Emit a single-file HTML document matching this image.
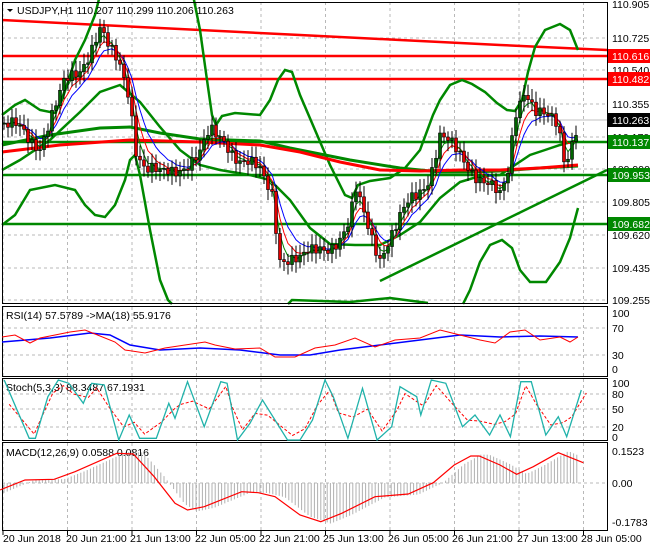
<!DOCTYPE html>
<html><head><meta charset="utf-8"><style>
html,body{margin:0;padding:0;background:#fff;width:650px;height:550px;overflow:hidden}
svg{display:block}
text{font-family:"Liberation Sans",sans-serif;font-size:10.5px;fill:#000}
</style></head><body>
<svg id="s" width="650" height="550" xmlns="http://www.w3.org/2000/svg">
<rect width="650" height="550" fill="#fff"/>
<g id="grid" stroke="#b8b8b8" stroke-dasharray="3,3" stroke-width="1"></g>
<g id="main"></g>
<!-- horizontal levels -->
<line x1="2" y1="120" x2="607" y2="120" stroke="#c0c0c0" stroke-width="1"/>
<polyline points="2,20 100,25 200,30 300,35 400,40 500,45 607,50" fill="none" stroke="#f00" stroke-width="2.5"/>
<line x1="2" y1="56" x2="607" y2="56" stroke="#f00" stroke-width="2.5"/>
<line x1="2" y1="79" x2="607" y2="79" stroke="#f00" stroke-width="2.5"/>
<line x1="2" y1="142" x2="607" y2="142" stroke="#080" stroke-width="2.5"/>
<line x1="2" y1="175" x2="607" y2="175" stroke="#080" stroke-width="2.5"/>
<line x1="2" y1="224" x2="607" y2="224" stroke="#080" stroke-width="2.5"/>
<line x1="380" y1="281" x2="607" y2="170" stroke="#080" stroke-width="2.5"/>
<!-- bands -->
<g fill="none" stroke="#080" stroke-width="2.5">
<polyline points="2,115 15,105 25,100 40,110 55,113 62,100 67,85 75,60 85,40 95,15 100,-5"/>
<polyline points="193,-5 200,30 207,80 212,115 216,125 222,116 235,113 260,115 270,100 278,80 285,70 292,72 300,95 315,130 330,165 345,195 352,198 358,185 370,181 390,178 405,168 420,150 433,115 440,100 450,85 462,80 472,84 485,92 497,103 507,110 515,111 522,100 528,72 535,47 545,30 560,24 570,30 578,50"/>
<polyline points="2,225 15,215 30,190 55,185 75,190 85,205 95,215 105,217 115,205 125,180 130,160 135,155 140,175 150,230 160,280 168,300 172,304"/>
<polyline points="288,304 292,300 350,302 390,298 428,303"/>
<polyline points="463,304 470,290 480,262 490,245 502,240 512,248 520,270 530,282 546,282 560,262 570,238 578,208"/>
<polyline points="2,170 20,160 50,140 80,112 100,92 120,85 140,102 160,127 180,150 200,165 220,170 250,175 270,180 290,200 310,228 330,244 355,245 380,245 400,235 420,222 440,198 460,182 480,176 500,175 515,165 530,155 545,150 560,145 578,140"/>
</g>
<polyline points="2,145 50,135 100,128 130,127 160,133 200,139 260,141 290,148 350,160 400,168 440,172 470,172 500,171 540,168 578,166" fill="none" stroke="#080" stroke-width="3"/>
<polyline points="2,152 60,145 130,140 200,142 260,145 300,152 340,162 380,170 420,171 460,170 500,170 540,168 578,165" fill="none" stroke="#f00" stroke-width="3"/>
<g id="candles"></g>
<!-- panel borders -->
<g fill="none" stroke="#000" stroke-width="1">
<rect x="2.5" y="2.5" width="605" height="301"/>
<rect x="2.5" y="306.5" width="605" height="70"/>
<rect x="2.5" y="378.5" width="605" height="62"/>
<rect x="2.5" y="442.5" width="605" height="88"/>
</g>
<g id="ticks" stroke="#000"></g>
<!-- labels right -->
<g>
<text x="612" y="8">110.905</text><text x="612" y="42">110.725</text><text x="612" y="74">110.540</text>
<text x="612" y="108">110.355</text><text x="612" y="141">110.170</text><text x="612" y="173">109.990</text>
<text x="612" y="206">109.805</text><text x="612" y="239">109.620</text><text x="612" y="272">109.435</text><text x="612" y="304">109.255</text>
<rect x="608" y="49" width="42" height="14" fill="#f00"/><text x="612" y="60" style="fill:#fff">110.616</text>
<rect x="608" y="72" width="42" height="14" fill="#f00"/><text x="612" y="83" style="fill:#fff">110.482</text>
<rect x="608" y="113" width="42" height="14" fill="#000"/><text x="612" y="124" style="fill:#fff">110.263</text>
<rect x="608" y="135" width="42" height="14" fill="#080"/><text x="612" y="146" style="fill:#fff">110.137</text>
<rect x="608" y="168" width="42" height="14" fill="#080"/><text x="612" y="179" style="fill:#fff">109.953</text>
<rect x="608" y="217" width="42" height="14" fill="#080"/><text x="612" y="228" style="fill:#fff">109.682</text>
<text x="612" y="317">100</text><text x="612" y="332">70</text><text x="612" y="359">30</text><text x="612" y="373">0</text>
<text x="612" y="387">100</text><text x="612" y="398">80</text><text x="612" y="413">50</text><text x="612" y="431">20</text><text x="612" y="441">0</text>
<text x="612" y="455">0.1523</text><text x="612" y="487">0.00</text><text x="612" y="526">-0.1783</text>
</g>
<path d="M7,9 L13,9 L10,12 Z" fill="#000"/>
<text x="17" y="14">USDJPY,H1  110.207 110.299 110.206 110.263</text>
<text x="6" y="319">RSI(14) 57.5789  -&gt;MA(18) 55.9176</text>
<text x="6" y="391">Stoch(5,3,3) 88.3487 67.1931</text>
<text x="6" y="456">MACD(12,26,9) 0.0588 0.0816</text>
<g>
<text x="3" y="542">20 Jun 2018</text><text x="66" y="542">20 Jun 21:00</text><text x="130" y="542">21 Jun 13:00</text>
<text x="195" y="542">22 Jun 05:00</text><text x="259" y="542">22 Jun 21:00</text><text x="323" y="542">25 Jun 13:00</text>
<text x="388" y="542">26 Jun 05:00</text><text x="452" y="542">26 Jun 21:00</text><text x="517" y="542">27 Jun 13:00</text><text x="581" y="542">28 Jun 05:00</text>
</g>
</svg>
<script>
var NS="http://www.w3.org/2000/svg",s=document.getElementById('s');
function el(p,t,a){var e=document.createElementNS(NS,t);for(var k in a)e.setAttribute(k,a[k]);p.appendChild(e);return e;}
var g=document.getElementById('grid');
for(var k=0;k<10;k++){var x=3+k*64.5;[[2,303],[307,376],[379,440],[443,530]].forEach(function(r){el(g,'line',{x1:x,y1:r[0],x2:x,y2:r[1]});});
 el(document.getElementById('ticks'),'line',{x1:x,y1:531,x2:x,y2:535});}
[38,70,104,137,169,202,235,268,300].forEach(function(y){el(g,'line',{x1:2,y1:y,x2:607,y2:y});});
[328,355,394,409,427,483].forEach(function(y){el(g,'line',{x1:2,y1:y,x2:607,y2:y});});
function interp(pts,x){for(var i=1;i<pts.length;i++){if(x<=pts[i][0]){var a=pts[i-1],b=pts[i];return a[1]+(b[1]-a[1])*(x-a[0])/(b[0]-a[0]);}}return pts[pts.length-1][1];}
var P=[[4,110.2],[20,110.2],[40,110.12],[55,110.3],[65,110.45],[80,110.55],[90,110.65],[100,110.75],[110,110.62],[120,110.55],[130,110.4],[135,110.12],[145,109.98],[160,109.93],[180,110.0],[200,110.05],[210,110.17],[225,110.15],[240,110.03],[260,109.95],[272,109.85],[280,109.5],[300,109.45],[320,109.55],[340,109.58],[350,109.65],[355,109.85],[365,109.72],[380,109.5],[395,109.62],[410,109.8],[430,109.95],[440,110.15],[450,110.1],[470,110.0],[490,109.88],[500,109.8],[508,109.95],[515,110.3],[525,110.45],[535,110.3],[545,110.25],[558,110.22],[565,110.02],[572,110.15],[578,110.26]];
function Y(p){return 3+(110.905-p)*179;}
var cg=document.getElementById('candles'),closes=[],xs=[];
for(var x=4;x<=578;x+=4){var c=interp(P,x)+0.04*Math.sin(x*1.7)+0.025*Math.sin(x*0.63);closes.push(c);xs.push(x);}
function ema(n){var a=2/(n+1),r=[],v=closes[0];closes.forEach(function(c){v=v+a*(c-v);r.push(v);});return r;}
[[8,'#00f'],[5,'#f00'],[3,'#080']].forEach(function(m){var e=ema(m[0]);el(cg,'polyline',{points:e.map(function(v,i){return xs[i]+','+Y(v).toFixed(1);}).join(' '),fill:'none',stroke:m[1],'stroke-width':1});});
for(var i=0;i<closes.length;i++){var o=i?closes[i-1]:closes[0],c=closes[i],x=xs[i];
 var hi=Math.max(o,c)+0.03+0.03*Math.abs(Math.sin(x*2.3)),lo=Math.min(o,c)-0.03-0.03*Math.abs(Math.cos(x*1.9));
 el(cg,'line',{x1:x,y1:Y(hi),x2:x,y2:Y(lo),stroke:'#000','stroke-width':1});
 var t=Y(Math.max(o,c)),b=Y(Math.min(o,c));if(b-t<1)b=t+1;
 el(cg,'rect',{x:x-1.5,y:t,width:3,height:b-t,fill:c>=o?'#006400':'#e00000',stroke:'#000','stroke-width':0.6});}
function pl(pts,sx,st,w,dash){var a={points:pts.map(function(p){return (p[0]/sx).toFixed(1)+','+(300+p[1]/3).toFixed(1);}).join(' '),fill:'none',stroke:st,'stroke-width':w};if(dash)a['stroke-dasharray']=dash;el(s,'polyline',a);}
function pl2(pts,st,w,dash){var a={points:pts.map(function(p){return p.join(',');}).join(' '),fill:'none',stroke:st,'stroke-width':w};if(dash)a['stroke-dasharray']=dash;el(s,'polyline',a);}
// RSI
pl2([[2,342],[50,338],[90,333],[110,335],[130,345],[160,350],[200,348],[240,350],[280,355],[310,355],[340,350],[380,345],[420,340],[460,335],[500,337],[540,336],[578,337]],'#00f',1.5);
pl2([[2,337],[15,335],[30,343],[40,338],[55,335],[70,332],[85,330],[100,336],[115,342],[125,350],[145,353],[165,348],[185,345],[205,342],[215,345],[235,349],[260,348],[275,357],[295,357],[315,348],[335,345],[355,338],[375,347],[395,340],[420,338],[440,330],[460,335],[480,340],[495,343],[510,332],[525,330],[540,340],[560,337],[570,342],[578,337]],'#f00',1);
// Stoch
var st=[[10,240],[70,415],[85,415],[115,290],[140,240],[165,250],[200,310],[220,250],[250,255],[285,420],[310,345],[335,415],[375,415],[405,310],[420,355],[450,245],[490,380],[530,245],[545,250],[570,420],[600,370],[630,300],[690,420],[720,420],[750,360],[780,240],[800,290],[835,415],[870,265],[905,420],[940,380],[960,260],[1000,290],[1010,345],[1035,240],[1070,250],[1110,380],[1140,345],[1175,405],[1200,345],[1225,410],[1250,245],[1275,245],[1310,405],[1340,350],[1360,410],[1395,270]];
pl(st.map(function(p,i){var n=st[i+1]||p;return [p[0]+12,(p[1]*0.6+n[1]*0.4)*0.85+0.15*330];}),2.4,'#f00',1,'3,2');
pl(st,2.4,'#20b2aa',1.3);
// MACD
var mc=[[0,570],[60,540],[130,538],[180,515],[280,460],[320,462],[370,530],[420,610],[450,630],[490,620],[580,575],[620,578],[660,590],[720,645],[770,665],[820,640],[900,590],[980,582],[1040,548],[1090,495],[1130,468],[1150,468],[1200,495],[1240,523],[1280,500],[1340,458],[1400,488]];
for(var x=4;x<=578;x+=3.2){var v=interp(mc,(x-10)*2.4);var y=300+v/3;var h=(y-483)*1.05;el(s,'line',{x1:x,y1:483,x2:x,y2:483+h,stroke:'#b0b0b0','stroke-width':1});}
pl(mc,2.4,'#f00',1.2);
</script>
</body></html>
